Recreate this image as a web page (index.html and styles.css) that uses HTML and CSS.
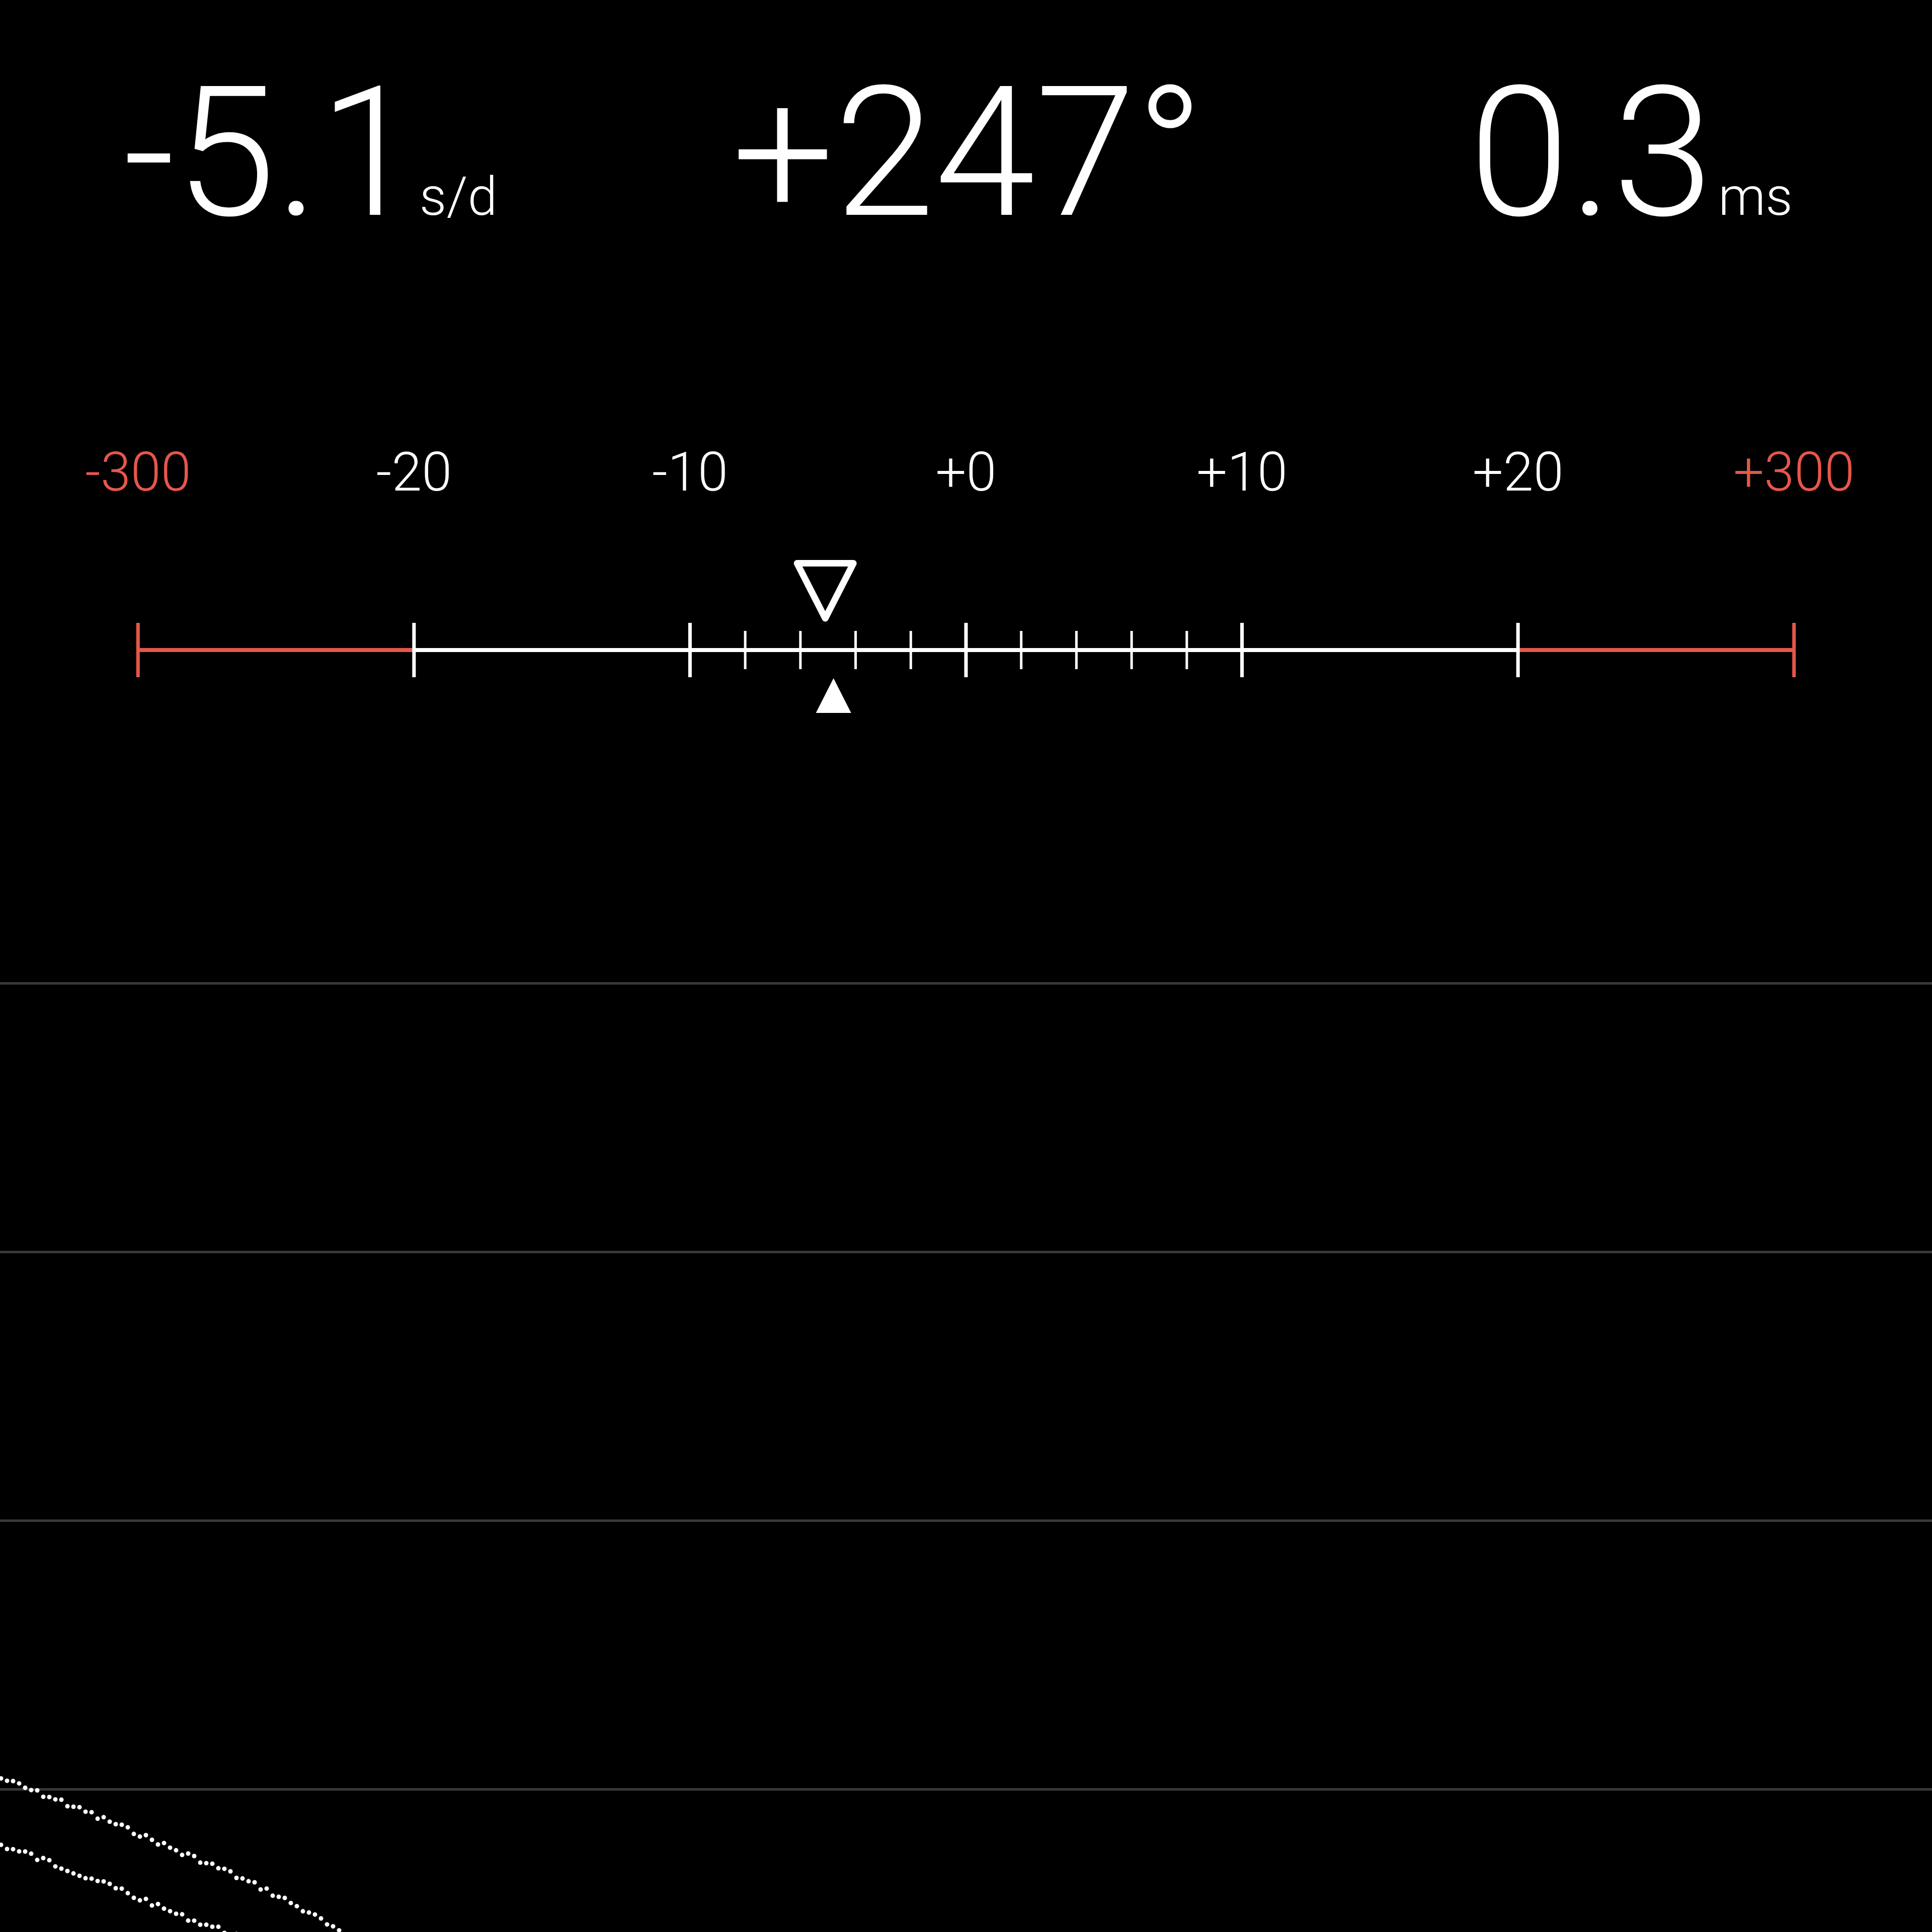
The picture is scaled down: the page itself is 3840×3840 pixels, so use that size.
FILE: index.html
```html
<!DOCTYPE html>
<html lang="en">
<head>
    <meta charset="UTF-8">
    <meta name="viewport" content="width=device-width, initial-scale=1.0">
    <title>Timegrapher</title>
    <link rel="stylesheet" href="styles.css">
</head>
<body>
    <main class="tuner">
        <!-- Rate, beat error and amplitude -->
        <section class="readouts">
            <div class="readout readout-rate">
                <span class="value">-5.1</span><span class="unit">s/d</span>
            </div>
            <div class="readout readout-beat">
                <span class="value">+247°</span>
            </div>
            <div class="readout readout-amp">
                <span class="value">0.3</span><span class="unit unit-ms">ms</span>
            </div>
        </section>

        <!-- Rate scale -->
        <section class="scale">
            <div class="scale-labels">
                <span class="label label-alert">-300</span>
                <span class="label">-20</span>
                <span class="label">-10</span>
                <span class="label">+0</span>
                <span class="label">+10</span>
                <span class="label">+20</span>
                <span class="label label-alert">+300</span>
            </div>
            <svg class="scale-bar" id="scaleBar" viewBox="0 0 3840 330" width="3840" height="330"></svg>
        </section>

        <!-- Trace -->
        <section class="trace" id="trace">
            <div class="trace-row"></div>
            <div class="trace-row"></div>
            <div class="trace-row"></div>
            <div class="trace-row"></div>
            <svg class="trace-dots" id="traceDots" width="3840"></svg>
        </section>
    </main>

    <script>
        document.addEventListener('DOMContentLoaded', function() {
            const NS = 'http://www.w3.org/2000/svg';
            const RED = '#e5574b';
            const step = 3840 / 7;
            const center = 1920;
            const lineY = 192;

            function el(parent, name, attrs) {
                const node = document.createElementNS(NS, name);
                Object.keys(attrs).forEach(key => node.setAttribute(key, attrs[key]));
                parent.appendChild(node);
                return node;
            }

            /**
             * Draws the rate scale: bar, ticks and the two markers
             */
            function drawScale() {
                const svg = document.getElementById('scaleBar');
                const first = step / 2;
                const last = 3840 - step / 2;

                // Bar: red outside ±20, white inside
                el(svg, 'line', { x1: first, y1: lineY, x2: first + step, y2: lineY, stroke: RED, 'stroke-width': 8 });
                el(svg, 'line', { x1: first + step, y1: lineY, x2: last - step, y2: lineY, stroke: '#fff', 'stroke-width': 8 });
                el(svg, 'line', { x1: last - step, y1: lineY, x2: last, y2: lineY, stroke: RED, 'stroke-width': 8 });

                // Major ticks
                for (let i = 0; i < 7; i++) {
                    const x = first + i * step;
                    const color = (i === 0 || i === 6) ? RED : '#fff';
                    el(svg, 'line', { x1: x, y1: 138, x2: x, y2: 246, stroke: color, 'stroke-width': 7 });
                }

                // Minor ticks every 2 s/d between -10 and +10
                for (let k = -4; k <= 4; k++) {
                    if (k === 0) continue;
                    const x = center + k * step / 5;
                    el(svg, 'line', { x1: x, y1: 154, x2: x, y2: 230, stroke: '#fff', 'stroke-width': 5 });
                }

                // Markers: current rate (open) and average (filled)
                const rate = center + (-5.1) * step / 10;
                el(svg, 'path', {
                    d: `M${rate - 56} 19.5 L${rate + 56} 19.5 L${rate} 129 Z`,
                    fill: 'none', stroke: '#fff', 'stroke-width': 13, 'stroke-linejoin': 'round'
                });
                const avg = center + (-4.8) * step / 10;
                el(svg, 'path', { d: `M${avg - 35} 317 L${avg + 35} 317 L${avg} 248 Z`, fill: '#fff' });
            }

            /**
             * Draws the two dotted beat traces in the lower left
             */
            function drawTrace() {
                const trace = document.getElementById('trace');
                const svg = document.getElementById('traceDots');
                const top = trace.getBoundingClientRect().top + window.scrollY;
                svg.setAttribute('height', trace.offsetHeight);

                let seed = 7;
                function rand() {
                    seed = (seed * 9301 + 49297) % 233280;
                    return seed / 233280;
                }

                function interp(points, x) {
                    for (let i = 1; i < points.length; i++) {
                        if (x <= points[i][0]) {
                            const [x0, y0] = points[i - 1];
                            const [x1, y1] = points[i];
                            return y0 + (y1 - y0) * (x - x0) / (x1 - x0);
                        }
                    }
                    return points[points.length - 1][1];
                }

                const curves = [
                    [[0, 3534], [122, 3581], [245, 3632], [367, 3685], [490, 3737], [612, 3800], [673, 3840], [760, 3900]],
                    [[0, 3666], [122, 3710], [245, 3759], [367, 3811], [453, 3840], [540, 3880]]
                ];

                curves.forEach(points => {
                    const end = points[points.length - 1][0];
                    for (let x = 2; x < end; x += 12) {
                        const jitter = Math.round((rand() - 0.5) * 3) * 4;
                        const y = interp(points, x) + jitter - top;
                        el(svg, 'circle', { cx: x, cy: y, r: 4.5, fill: '#fff' });
                    }
                });
            }

            drawScale();
            drawTrace();
        });
    </script>
</body>
</html>
```

FILE: styles.css
```css
/* Base */
:root {
    --ink: #fff;
    --alert: #e5574b;
    --grid: #383838;
}

body {
    margin: 0;
    padding: 0;
    background-color: #000;
    color: var(--ink);
    font-family: 'Roboto', 'Liberation Sans', sans-serif;
    font-weight: 300;
}

.tuner {
    width: 3840px;
    height: 3840px;
    overflow: hidden;
    display: flex;
    flex-direction: column;
}

/* Readouts */
.readouts {
    display: flex;
    justify-content: space-between;
    align-items: baseline;
    padding: 0 277px 0 245px;
    height: 500px;
    box-sizing: border-box;
    line-height: 1;
}

.readout {
    padding-top: 124px;
    white-space: nowrap;
}

.readout-beat {
    margin-right: 60px;
}

.value {
    font-size: 360px;
}

.unit {
    font-size: 106px;
    margin-left: 0;
}

.unit-ms {
    margin-left: 10px;
}

/* Scale */
.scale {
    display: flex;
    flex-direction: column;
}

.scale-labels {
    display: grid;
    grid-template-columns: repeat(7, 1fr);
    padding-top: 384px;
    height: 600px;
    box-sizing: border-box;
    line-height: 1;
}

.label {
    text-align: center;
    font-size: 108px;
}

.label-alert {
    color: var(--alert);
}

.scale-bar {
    display: block;
}

/* Trace */
.trace {
    position: relative;
    flex: 1;
}

.trace-row {
    height: 529px;
    border-bottom: 5px solid var(--grid);
}

.trace-row:first-child {
    height: 522px;
}

.trace-dots {
    position: absolute;
    top: 0;
    left: 0;
}
```
